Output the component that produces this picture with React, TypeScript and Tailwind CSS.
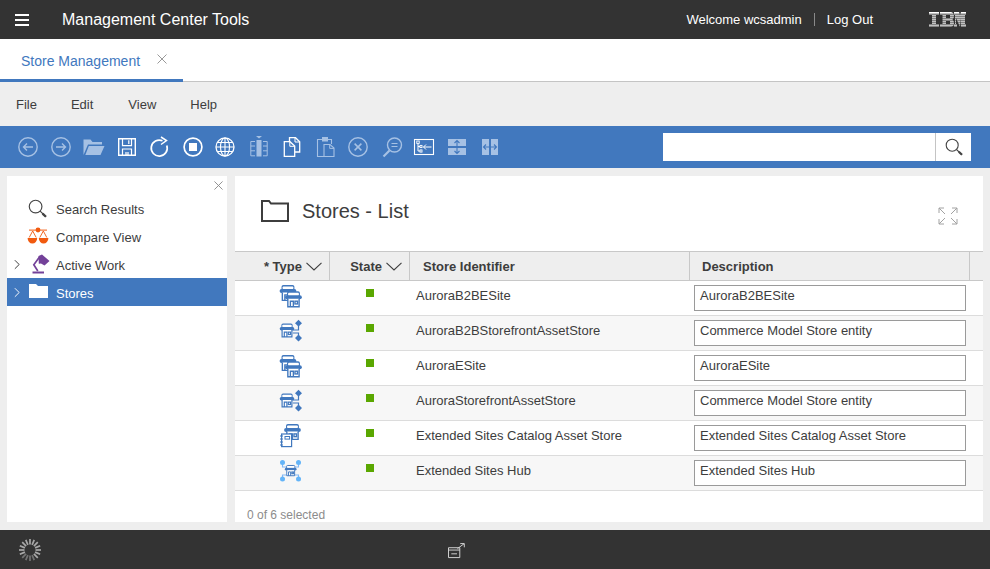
import { ReactNode } from "react";

const rows = [
  { id: "AuroraB2BESite", desc: "AuroraB2BESite", icon: "site" },
  { id: "AuroraB2BStorefrontAssetStore", desc: "Commerce Model Store entity", icon: "asset" },
  { id: "AuroraESite", desc: "AuroraESite", icon: "site" },
  { id: "AuroraStorefrontAssetStore", desc: "Commerce Model Store entity", icon: "asset" },
  { id: "Extended Sites Catalog Asset Store", desc: "Extended Sites Catalog Asset Store", icon: "catalog" },
  { id: "Extended Sites Hub", desc: "Extended Sites Hub", icon: "hub" },
];

function Tool({ children }: { children: ReactNode }) {
  return (
    <div className="w-[33px] h-[24px] flex items-center justify-center shrink-0">
      <svg width="24" height="24" viewBox="0 0 24 24" fill="none" stroke="currentColor" strokeWidth="1.4">
        {children}
      </svg>
    </div>
  );
}

// small shop drawing, x/y is the top left of the awning
function Shop({ x, y, s = 1 }: { x: number; y: number; s?: number }) {
  const color = "#4178be";
  return (
    <g transform={`translate(${x} ${y}) scale(${s})`} stroke={color} fill="none" strokeWidth="1.2">
      <path d="M1.5 6V1.5Q1.5.6 2.5.6H10.5Q11.5.6 11.5 1.5V6" fill="#fff" />
      <rect x="-.8" y="3.4" width="14.6" height="3.6" rx="1.8" fill={color} stroke="none" />
      <rect x="1.8" y="1.8" width="9.4" height="1.3" fill="#fff" stroke="none" />
      <path d="M1.6 6.5V13.4H11.4V6.5" fill="#fff" />
      <path d="M3.8 13.4V8.6H6.4V13.4" />
      <rect x="7.8" y="8.6" width="2.2" height="2.4" />
    </g>
  );
}

function StoreIcon({ kind }: { kind: string }) {
  if (kind === "site") {
    return (
      <svg width="24" height="24" viewBox="0 0 24 24">
        <Shop x={1.5} y={1} s={1.15} />
        <Shop x={7} y={7.3} s={1.15} />
      </svg>
    );
  }
  if (kind === "asset") {
    return (
      <svg width="24" height="24" viewBox="0 0 24 24">
        <path d="M14 11H19.5V4.5M14 14H19.5V19" fill="none" stroke="#4178be" strokeWidth="1.2" />
        <path d="M19.5 .8L23 4.2L19.5 7.6L16 4.2Z M19.5 15.6L23 19L19.5 22.4L16 19Z" fill="#4178be" />
        <Shop x={1.5} y={4.5} />
      </svg>
    );
  }
  if (kind === "catalog") {
    return (
      <svg width="24" height="24" viewBox="0 0 24 24">
        <Shop x={6} y={0} s={1.15} />
        <rect x="2.6" y="10" width="10" height="12.6" fill="#fff" stroke="#4178be" strokeWidth="1.2" />
        <path d="M1 12H4M1 15H4M1 18H4M1 21H4" stroke="#4178be" strokeWidth="1" />
        <rect x="6" y="12.5" width="4.6" height="2.6" fill="none" stroke="#4178be" strokeWidth="1" />
      </svg>
    );
  }
  return (
    <svg width="24" height="24" viewBox="0 0 24 24">
      <path d="M3.5 3.5V8H8M19.5 3.5V8H15M3.5 20V16H8M19.5 20V16H15" fill="none" stroke="#82b8f5" strokeWidth="1.1" />
      <circle cx="3.5" cy="3.5" r="2.5" fill="#64b4f8" />
      <circle cx="19.5" cy="3.5" r="2.5" fill="#64b4f8" />
      <circle cx="3.5" cy="20" r="2.5" fill="#64b4f8" />
      <circle cx="19.5" cy="20" r="2.5" fill="#64b4f8" />
      <Shop x={6.5} y={6} s={0.8} />
    </svg>
  );
}

function Chevron({ className, down }: { className?: string; down?: boolean }) {
  return (
    <svg className={className} width={down ? 16 : 7} height={down ? 9 : 11} viewBox={down ? "0 0 16 9" : "0 0 7 11"} fill="none" stroke="currentColor" strokeWidth="1.1">
      <path d={down ? "M.5 .8L8 8L15.5 .8" : "M1 .5L6 5.5L1 10.5"} />
    </svg>
  );
}

function Magnifier({ size }: { size: number }) {
  return (
    <svg width={size} height={size} viewBox="0 0 18 18" fill="none" stroke="#444">
      <circle cx="7.2" cy="7.2" r="6" strokeWidth="1.1" />
      <path d="M11.5 11.5L17 16.8" strokeWidth="1.1" />
      <path d="M13.8 13.8L17 16.8" strokeWidth="2.2" />
    </svg>
  );
}

function Cross({ className }: { className?: string }) {
  return (
    <svg className={className} width="10" height="10" viewBox="0 0 10 10" fill="none" stroke="currentColor" strokeWidth="1">
      <path d="M.5 .5L9.5 9.5M9.5 .5L.5 9.5" />
    </svg>
  );
}

function Spinner() {
  const spokes = Array.from({ length: 16 }, (_, i) => (i * 360) / 16);
  return (
    <svg width="26" height="26" viewBox="0 0 26 26">
      {spokes.map((a) => (
        <line key={a} x1="13" y1="2" x2="13" y2="7.5" stroke="#a8a8a8" strokeWidth="1.7" transform={`rotate(${a} 13 13)`} opacity={a > 150 && a < 240 ? 0.55 : 1} />
      ))}
    </svg>
  );
}

function IbmLogo() {
  const stripes = [1.7, 3.7, 5.7, 7.7, 9.7, 11.7, 13.7];
  return (
    <svg width="37" height="16" viewBox="0 0 37 16" fill="#fff">
      <path d="M0 0H10V3H7V12H10V15H0V12H3V3H0Z" />
      <path d="M11 0H22Q25 .5 25 4Q25 6.5 23.5 7.5Q25 8.5 25 11Q25 14.5 22 15H11V12H13.5V3H11ZM17 3V6H21V3ZM17 9V12H21V9Z" fillRule="evenodd" />
      <path d="M25 0H30L31 3L32 0H37V3H36V12H37V15H32V6L31 15L27 6V12H28V15H25V12H26V3H25Z" />
      {stripes.map((y) => (
        <rect key={y} x="0" y={y} width="37" height="0.9" fill="#333" />
      ))}
    </svg>
  );
}

export default function App() {
  return (
    <div className="w-[990px] h-[569px] flex flex-col bg-[#eeeeee] overflow-hidden [font-family:Liberation_Sans,Arial,sans-serif] text-[#3d3d3d]">
      {/* Top bar */}
      <div className="h-[39px] shrink-0 bg-[#333333] flex items-center text-white">
        <div className="w-[62px] pl-[15px] shrink-0 flex flex-col gap-[3px]">
          <div className="w-[14px] h-[2px] bg-white" />
          <div className="w-[14px] h-[2px] bg-white" />
          <div className="w-[14px] h-[2px] bg-white" />
        </div>
        <span className="text-[16px]">Management Center Tools</span>
        <div className="ml-auto flex items-center text-[13px]">
          <span>Welcome wcsadmin</span>
          <div className="w-px h-[13px] bg-[#8a8a8a] mx-[12px]" />
          <span>Log Out</span>
          <div className="ml-[56px] mr-[24px]">
            <IbmLogo />
          </div>
        </div>
      </div>

      {/* Tabs */}
      <div className="h-[43px] shrink-0 bg-white border-b border-[#c4c4c4] flex items-stretch">
        <div className="w-[183px] h-[43px] border-b-[3px] border-[#4178be] pl-[21px] flex items-center gap-[17px] text-[#4178be] text-[14px] pt-[4px]">
          <span>Store Management</span>
          <Cross className="text-[#999999] mb-[5px]" />
        </div>
      </div>

      {/* Menu */}
      <div className="h-[44px] shrink-0 flex items-center pl-[16px] gap-[34px] text-[13px] pt-[2px]">
        <span>File</span>
        <span>Edit</span>
        <span className="ml-[1px]">View</span>
        <span>Help</span>
      </div>

      {/* Toolbar */}
      <div className="h-[42px] shrink-0 bg-[#4178be] flex items-center pl-[11px] pr-[19px] text-white">
        <div className="flex items-center text-[#a6c1e4] -mt-[1px]">
          <Tool>
            <circle cx="12" cy="12" r="9.2" />
            <path d="M17 12H8M11 8.5L7.5 12L11 15.5" />
          </Tool>
          <Tool>
            <circle cx="12" cy="12" r="9.2" />
            <path d="M7 12H16M13 8.5L16.5 12L13 15.5" />
          </Tool>
          <Tool>
            <path d="M1.5 20V4.5H8.5L10.5 7H20V9.5H6L1.5 20ZM6.8 11H22.5L18.5 20H3.3Z" fill="#a6c1e4" stroke="none" />
          </Tool>
          <div className="text-white">
            <Tool>
              <path d="M3.7 3.7H20.3V20.3H3.7Z" />
              <path d="M7.5 3.7V10.7H16.5V3.7M13.8 5.3V9M7.5 20.3V14H16.5V20.3M11 17V20.3H13V17" strokeWidth="1.2" />
            </Tool>
          </div>
          <div className="text-white">
            <Tool>
              <path d="M18.8 10.5A8 8 0 1 1 14.5 5.8" strokeWidth="1.7" />
              <path d="M13 2L18.5 5.6L13 9.5" strokeWidth="1.5" />
            </Tool>
          </div>
          <div className="text-white">
            <Tool>
              <circle cx="12" cy="12" r="8.9" strokeWidth="1.7" />
              <rect x="8" y="8" width="8" height="8" fill="#fff" stroke="none" />
            </Tool>
          </div>
          <div className="text-white">
            <Tool>
              <circle cx="11" cy="12" r="9" strokeWidth="1.3" />
              <ellipse cx="11" cy="12" rx="4.5" ry="9" strokeWidth="1.1" />
              <path d="M11 3V21M2 12H20M3.4 7.5H18.6M3.4 16.5H18.6" strokeWidth="1.1" />
            </Tool>
          </div>
          <Tool>
            <path d="M9 1H15L12 3.5Z" fill="#a6c1e4" stroke="none" />
            <rect x="9.5" y="5" width="5" height="16.5" fill="#a6c1e4" stroke="none" />
            <path d="M8 6.5H3.8V20.8H8M3.8 11H8M3.8 15.8H8M16 6.5H20.2V20.8H16M16 11H20.2M16 15.8H20.2" strokeWidth="1" />
          </Tool>
          <div className="text-white">
            <Tool>
              <path d="M9.5 6.5V2.7H15.5L19.7 6.7V17H15" strokeWidth="1.3" />
              <path d="M15 2.7V7H19.7" strokeWidth="1" />
              <path d="M4.3 6.7H10L14.7 11V21.3H4.3Z" fill="#4178be" strokeWidth="1.3" />
              <path d="M9.8 6.7V11.3H14.7" strokeWidth="1" />
            </Tool>
          </div>
          <Tool>
            <rect x="9" y="2" width="6" height="4.5" fill="#a6c1e4" stroke="none" />
            <path d="M9 4.5H4.5V21.5H11M15 4.5H18.5V9" strokeWidth="1.1" />
            <path d="M11 9.5H17L21 13V21.5H11Z" strokeWidth="1.1" />
            <path d="M16.7 9.5V13.4H21" strokeWidth="1" />
          </Tool>
          <Tool>
            <circle cx="12" cy="12" r="9.2" />
            <path d="M8.6 8.6L15.4 15.4M15.4 8.6L8.6 15.4" strokeWidth="1.5" />
          </Tool>
          <Tool>
            <circle cx="15.5" cy="10" r="7" />
            <path d="M12.5 8.5H18.5M12.5 11.5H18.5" strokeWidth="1.1" />
            <path d="M10.5 15.5L4.5 21.5" strokeWidth="2.2" />
          </Tool>
          <div className="text-white">
            <Tool>
              <rect x="2.5" y="4.5" width="19" height="15" strokeWidth="1.1" />
              <path d="M6 7V16H8M6 11.5H8M11.5 12H19.5M14 9.5L11.5 12L14 14.5" strokeWidth="1" />
              <rect x="4.8" y="6" width="2.4" height="2.4" strokeWidth=".9" fill="#4178be" />
              <rect x="8" y="10.4" width="2" height="2.2" strokeWidth=".9" fill="#4178be" />
              <rect x="8" y="14.9" width="2" height="2.2" strokeWidth=".9" fill="#4178be" />
            </Tool>
          </div>
          <Tool>
            <path d="M3 4H21V11H3ZM3 13H21V20H3Z" fill="#a6c1e4" stroke="none" />
            <path d="M12 5.5V18.5M9.5 8L12 5.5L14.5 8M9.5 16L12 18.5L14.5 16" stroke="#4178be" strokeWidth="1.1" />
          </Tool>
          <Tool>
            <path d="M4 4H11V20H4ZM13 4H20V20H13Z" fill="#a6c1e4" stroke="none" />
            <path d="M5.5 12H18.5M8 9.5L5.5 12L8 14.5M16 9.5L18.5 12L16 14.5" stroke="#4178be" strokeWidth="1.1" />
          </Tool>
        </div>
        <div className="ml-auto w-[308px] h-[28px] bg-white flex">
          <div className="flex-1 border-r border-[#c4c4c4]" />
          <div className="w-[35px] flex items-center justify-center">
            <Magnifier size={18} />
          </div>
        </div>
      </div>

      {/* Workspace */}
      <div className="flex-1 min-h-0 flex gap-[8px] pl-[7px] pr-[7px] pt-[8px] pb-[8px]">
        <div className="w-[220px] shrink-0 bg-white relative pt-[18px] text-[13px]">
          <Cross className="absolute top-[5px] right-[4px] text-[#888888] w-[9px] h-[9px]" />
          <div className="h-[28px] flex items-center pl-[21px]">
            <div className="w-[28px] shrink-0">
              <Magnifier size={19} />
            </div>
            <span className="pt-[4px]">Search Results</span>
          </div>
          <div className="h-[28px] flex items-center pl-[20px]">
            <div className="w-[29px] shrink-0">
              <svg width="22" height="18" viewBox="0 0 22 18" fill="#f15a0f" stroke="none">
                <circle cx="11" cy="3" r="2.4" />
                <path d="M2 2.6H20V3.6H2Z" />
                <path d="M5.7 4L2.2 10.5M5.7 4L9.2 10.5M16.3 4L12.8 10.5M16.3 4L19.8 10.5" stroke="#f15a0f" strokeWidth=".9" fill="none" />
                <path d="M.6 11H10.2A4.8 5.6 0 0 1 .6 11ZM11.8 11H21.4A4.8 5.6 0 0 1 11.8 11Z" />
              </svg>
            </div>
            <span className="pt-[4px]">Compare View</span>
          </div>
          <div className="h-[28px] flex items-center pl-[7px]">
            <Chevron className="text-[#333333] w-[6px] mr-[9px]" />
            <div className="w-[27px] shrink-0 pl-[1px]">
              <svg width="20" height="20" viewBox="0 0 20 20" fill="#734199">
                <path d="M8.5 2L12 .5L19.5 7L14.5 11.5L11 9.5L8.8 9.8Z" />
                <path d="M9.5 3L3.8 10.8L7.8 17" fill="none" stroke="#734199" strokeWidth="1.7" />
                <path d="M2.5 17.5H14V19.5H2.5Z" />
              </svg>
            </div>
            <span className="pt-[4px]">Active Work</span>
          </div>
          <div className="h-[28px] flex items-center pl-[7px] bg-[#4178be] text-white">
            <Chevron className="w-[6px] mr-[9px]" />
            <div className="w-[27px] shrink-0">
              <svg width="19" height="14" viewBox="0 0 19 14" fill="#fff" className="-mt-[3px]">
                <path d="M0 0H7L9 2H19V14H0Z" />
              </svg>
            </div>
            <span className="pt-[4px]">Stores</span>
          </div>
        </div>

        <div className="flex-1 bg-white flex flex-col min-w-0">
          <div className="h-[75px] shrink-0 flex items-center pl-[26px] pr-[25px]">
            <svg width="28" height="22" viewBox="0 0 28 22" fill="none" stroke="#3d3d3d" strokeWidth="2" className="mr-[13px] -mt-[6px]">
              <path d="M1 21V1H8L10 3.5H27V21Z" />
            </svg>
            <span className="text-[20px] -mt-[5px]">Stores - List</span>
            <svg className="ml-auto mt-[5px]" width="20" height="18" viewBox="0 0 20 18" fill="none" stroke="#a2a2a2" strokeWidth="1">
              <path d="M1 6V1H6M1 1L7 7M19 6V1H14M19 1L13 7M1 12V17H6M1 17L7 11M19 12V17H14M19 17L13 11" />
            </svg>
          </div>

          <div className="h-[30px] shrink-0 border-y border-[#c8c8c8] bg-[#eeeeee] flex items-stretch text-[13px] font-bold">
            <div className="w-[95px] border-r border-[#c8c8c8] flex items-center justify-end pr-[7px] gap-[4px]">
              <span className="pt-[1px]">* Type</span>
              <Chevron down />
            </div>
            <div className="w-[80px] border-r border-[#c8c8c8] flex items-center justify-end pr-[7px] gap-[4px]">
              <span className="pt-[1px]">State</span>
              <Chevron down />
            </div>
            <div className="w-[280px] border-r border-[#c8c8c8] flex items-center pl-[13px] pt-[1px]">Store Identifier</div>
            <div className="w-[280px] border-r border-[#c8c8c8] flex items-center pl-[12px] pt-[1px]">Description</div>
          </div>

          {rows.map((row, i) => (
            <div
              key={i}
              className={`h-[35px] shrink-0 border-b border-[#dcdcdc] flex items-stretch text-[13px] ${
                i % 2 === 1 ? "bg-[#f7f7f7]" : "bg-white"
              }`}
            >
              <div className="w-[95px] flex justify-center pt-[3px] pl-[16px]">
                <StoreIcon kind={row.icon} />
              </div>
              <div className="w-[80px] pt-[8px] pl-[36px]">
                <div className="w-[8px] h-[8px] bg-[#5aa700]" />
              </div>
              <div className="w-[279px] pl-[6px] pt-[5px]">{row.id}</div>
              <div className="w-[272px] border border-[#9a9a9a] bg-white h-[26px] mt-[4px] ml-[5px] pl-[5px]">{row.desc}</div>
            </div>
          ))}

          <div className="mt-auto pl-[12px] pb-[1px] text-[12px] leading-[12px] text-[#8c8c8c]">0 of 6 selected</div>
        </div>
      </div>

      {/* Footer */}
      <div className="h-[39px] shrink-0 bg-[#333333] flex items-center pl-[17px]">
        <Spinner />
        <svg className="ml-[405px] mt-[2px]" width="17" height="16" viewBox="0 0 18 17" fill="none" stroke="#d8d8d8" strokeWidth="1">
          <path d="M.5 5H12.5V15.5H.5ZM.5 7.5H12.5M3.5 11.5H9.5" />
          <path d="M10 6L17 .8M13 .6H17.3V4.6" />
        </svg>
      </div>
    </div>
  );
}
